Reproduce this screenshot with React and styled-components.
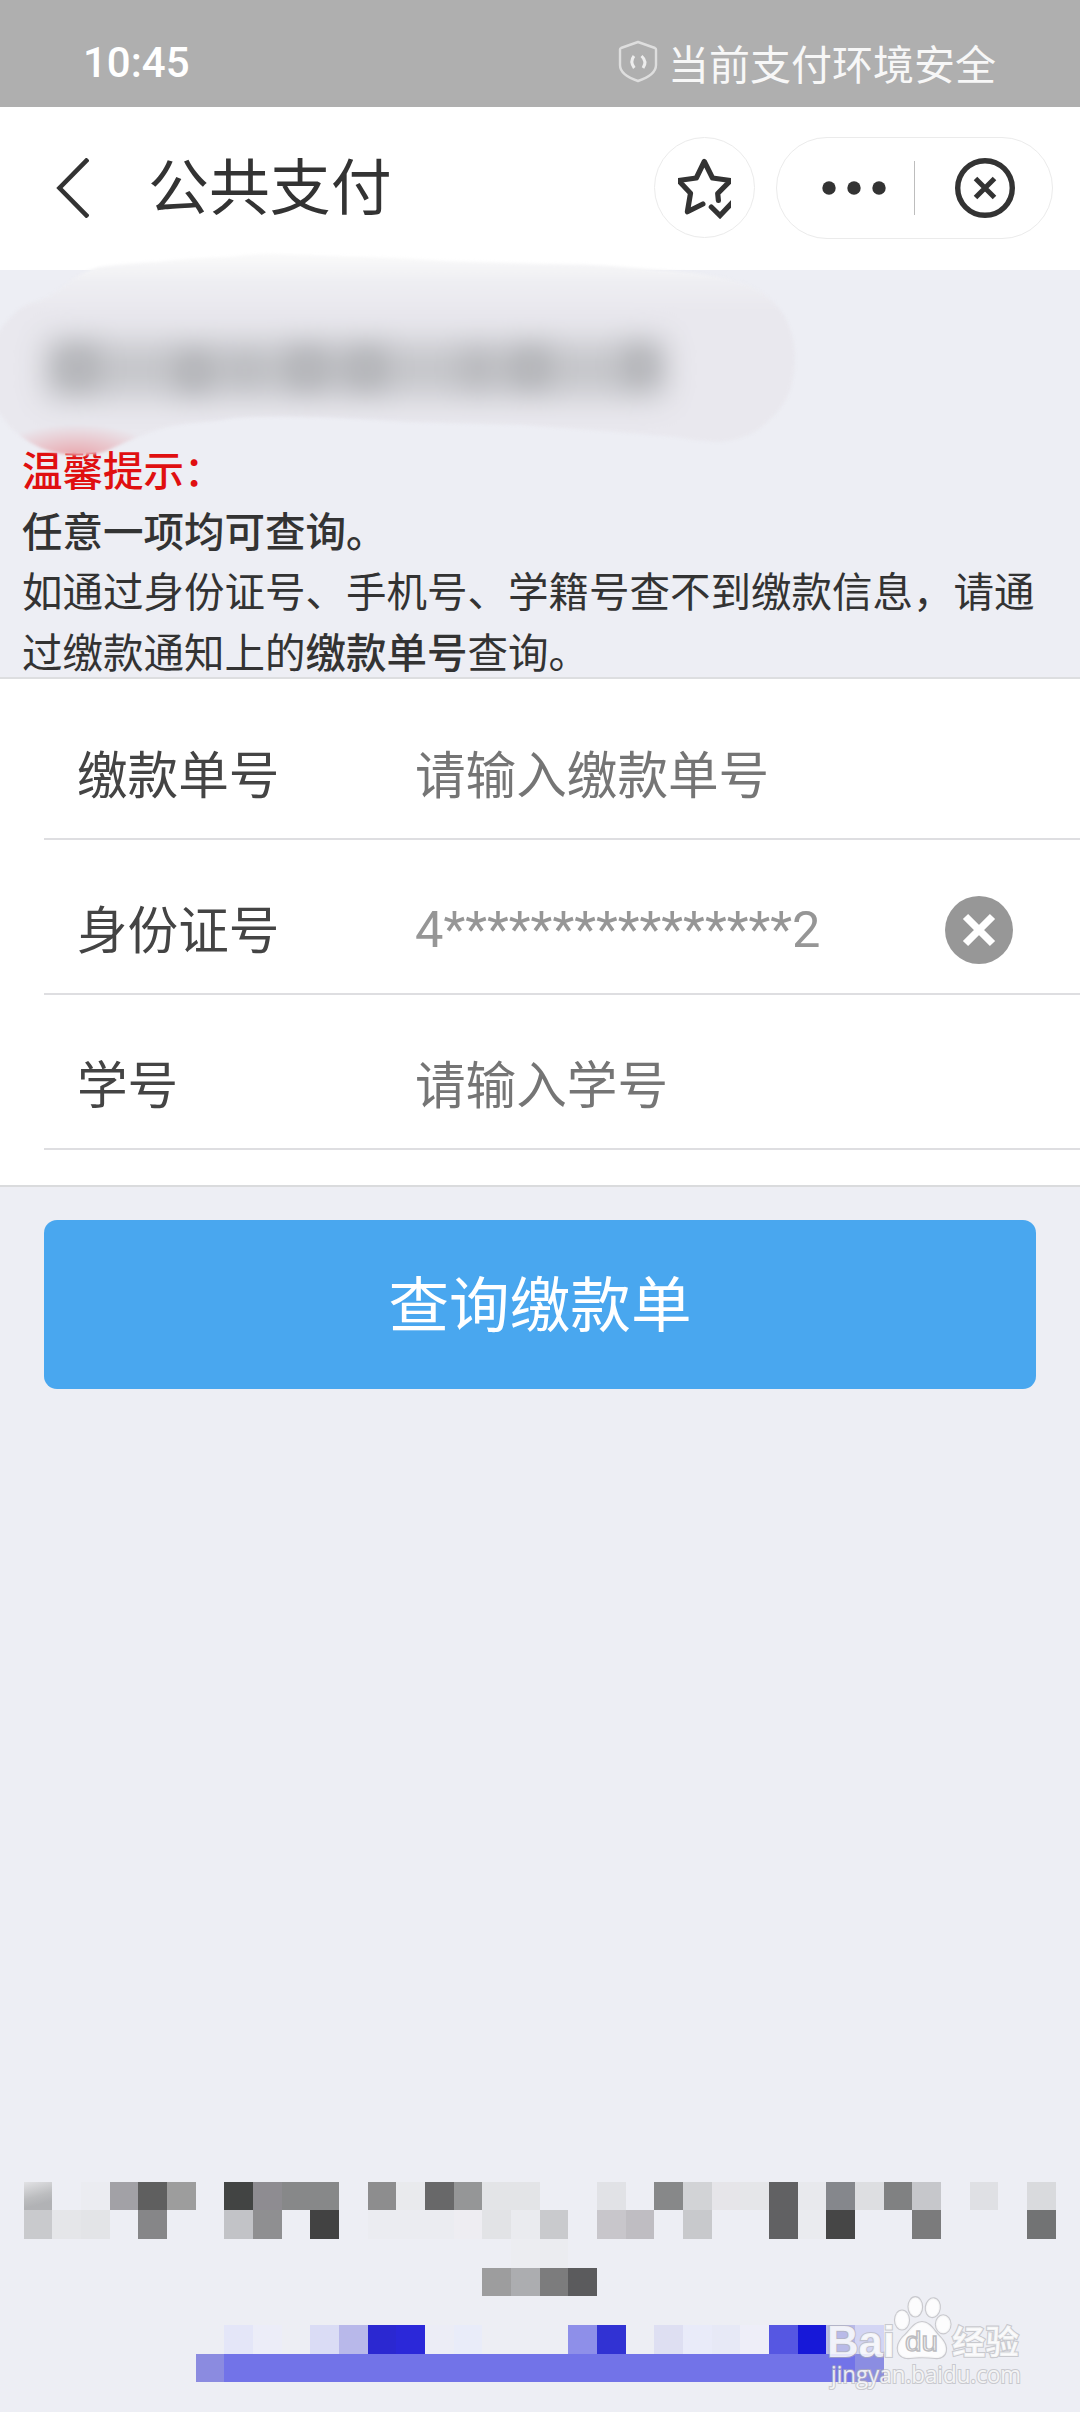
import React from "react";
import styled, { createGlobalStyle } from "styled-components";

const GlobalStyle = createGlobalStyle`
  * {
    box-sizing: border-box;
  }

  body {
    margin: 0;
    background-color: #edeef4;
    font-family: Roboto, "Noto Sans CJK SC", sans-serif;
  }
`;

const Screen = styled.div`
  position: relative;
  width: 1080px;
  height: 2412px;
  display: flex;
  flex-direction: column;
  overflow: hidden;
  background-color: #edeef4;
  color: #333333;
`;

// Status bar
const StatusBar = styled.div`
  height: 107px;
  flex-shrink: 0;
  display: flex;
  align-items: center;
  justify-content: space-between;
  padding: 18px 84px 0 83px;
  background-color: #afafaf;
`;

const Time = styled.div`
  font-size: 42px;
  font-weight: 500;
  line-height: 50px;
  color: #ffffff;
`;

const SafeTip = styled.div`
  display: flex;
  align-items: center;
  gap: 10px;
  font-family: "Noto Sans CJK SC", sans-serif;
  font-size: 41px;
  line-height: 50px;
  color: #f7f7f7;
  margin-top: -2px;

  svg {
    margin-top: -2px;
  }
`;

// Title bar
const NavBar = styled.header`
  height: 163px;
  flex-shrink: 0;
  display: flex;
  align-items: center;
  padding: 0 27px 2px 53px;
  background-color: #ffffff;
`;

const Title = styled.h1`
  flex: 1;
  margin: 0 0 7px 59px;
  font-family: "Noto Sans CJK SC", sans-serif;
  font-size: 60.9px;
  font-weight: 400;
  line-height: 80px;
`;

const FavoriteButton = styled.button`
  width: 101px;
  height: 101px;
  display: flex;
  align-items: center;
  justify-content: center;
  margin-right: 21px;
  padding: 0;
  border: 1px solid #ebebeb;
  border-radius: 50%;
  background: none;
`;

const Capsule = styled.div`
  width: 277px;
  height: 102px;
  display: flex;
  align-items: center;
  border: 1px solid #ebebeb;
  border-radius: 51px;
`;

const CapsuleButton = styled.button`
  width: ${(props) => props.$width};
  display: flex;
  justify-content: center;
  padding: ${(props) => props.$padding};
  border: 0;
  background: none;
`;

const CapsuleDivider = styled.span`
  width: 1px;
  height: 54px;
  background-color: #bdbdbd;
`;

// Notice
const Notice = styled.section`
  height: 407px;
  flex-shrink: 0;
  padding: 169px 22px 0;
  font-family: "Noto Sans CJK SC", sans-serif;
  font-size: 40.5px;
  line-height: 60.5px;
`;

const NoticeLine = styled.p`
  margin: 0;
  font-weight: ${(props) => (props.$strong ? 500 : 400)};
  color: ${(props) => props.$color || "#333333"};
`;

const Strong = styled.strong`
  font-weight: 500;
`;

const Smudge = styled.svg`
  position: absolute;
  top: 240px;
  left: 0;
  pointer-events: none;

  filter {
    color-interpolation-filters: sRGB;
  }
`;

// Form
const Form = styled.div`
  height: 510px;
  flex-shrink: 0;
  padding: 6px 0 0 44px;
  border-top: 2px solid #dddee0;
  border-bottom: 2px solid #dadbdd;
  background-color: #ffffff;
`;

const Field = styled.div`
  height: 155px;
  display: flex;
  align-items: center;
  padding: 26px 67px 0 33px;
  border-bottom: 2px solid #dedee1;
`;

const Label = styled.label`
  width: 338px;
  margin-bottom: 6px;
  font-family: "Noto Sans CJK SC", sans-serif;
  font-size: 50.6px;
  line-height: 70px;
  color: #444444;
`;

const Value = styled.div`
  flex: 1;
  margin-top: ${(props) => (props.$filled ? "0" : "4px")};
  font-size: 50.6px;
  line-height: 70px;
  color: ${(props) => (props.$filled ? "#969696" : "#757575")};
`;

const ClearButton = styled.button`
  display: flex;
  margin-top: 1px;
  padding: 0;
  border: 0;
  background: none;
`;

const SubmitButton = styled.button`
  height: 169px;
  flex-shrink: 0;
  margin: 33px 44px 0;
  padding: 0 0 9px;
  border: 0;
  border-radius: 13px;
  background-color: #49a7ef;
  font-family: "Noto Sans CJK SC", sans-serif;
  font-size: 60.6px;
  color: #ffffff;
`;

// Footer
const Footer = styled.footer`
  position: relative;
  margin-top: auto;
  padding: 0 24px 30px;
`;

const Mosaic = styled.div`
  display: grid;
  grid-template-columns: repeat(12, 28px 29px 29px);
  grid-template-rows: 28px 29px 29px 28px 29px 29px 28px;
`;

const Tile = styled.span`
  grid-row: ${(props) => props.$row};
  grid-column: ${(props) => props.$col} / span ${(props) => props.$span};
  background: ${(props) => props.$fill};
`;

const Watermark = styled.svg`
  position: absolute;
  right: 50px;
  bottom: 12px;
  overflow: visible;
`;

const fields = [
  { label: "缴款单号", value: "请输入缴款单号" },
  { label: "身份证号", value: "4****************2", filled: true },
  { label: "学号", value: "请输入学号" },
];

// row, first column, fill, columns covered
const tiles = [
  [0, 0, "linear-gradient(165deg, #e2e2e5 0%, #bcbdbf 50%, #b1b2b5 75%)"],
  [0, 2, "#ebecf1"],
  [0, 3, "#a2a1a6"],
  [0, 4, "#5f5f5f"],
  [0, 5, "#9d9d9d"],
  [0, 7, "#424443"],
  [0, 8, "#8e8c91"],
  [0, 9, "#878889", 2],
  [0, 12, "#8d8d8e"],
  [0, 13, "#e9eaed"],
  [0, 14, "#686869"],
  [0, 15, "#959697"],
  [0, 16, "#e3e4e7", 2],
  [0, 20, "#e1e2e6"],
  [0, 22, "#878889"],
  [0, 23, "#d2d3d6"],
  [0, 24, "#e6e5e9"],
  [0, 25, "#e5e6e9"],
  [0, 26, "#616163"],
  [0, 27, "#e8e9ed"],
  [0, 28, "#85878c"],
  [0, 29, "#dddee1"],
  [0, 30, "#808182"],
  [0, 31, "#c6c7cb"],
  [0, 33, "#dfe0e4"],
  [0, 35, "#d9dadd"],
  [1, 0, "#c9cacd"],
  [1, 1, "#e5e6e9"],
  [1, 2, "#e3e4e7"],
  [1, 4, "#868688"],
  [1, 7, "#c2c3c7"],
  [1, 8, "#8f8f91"],
  [1, 10, "#424242"],
  [1, 12, "#ebecf1", 3],
  [1, 15, "#eeedf2"],
  [1, 16, "#e2e3e6"],
  [1, 17, "#eaebef"],
  [1, 18, "#c9cacd"],
  [1, 20, "#c8c6cb"],
  [1, 21, "#bfbdc2"],
  [1, 23, "#c8c9cc"],
  [1, 26, "#616163"],
  [1, 27, "#eaebef"],
  [1, 28, "#464646"],
  [1, 31, "#7b7b7c"],
  [1, 35, "#727374"],
  [2, 17, "#ecedf1"],
  [2, 18, "#ebecf0"],
  [3, 16, "#9d9d9e"],
  [3, 17, "#acadb0"],
  [3, 18, "#7c7c7d"],
  [3, 19, "#5b5b5d"],
  [5, 7, "#e4e6f8"],
  [5, 8, "#ecedf8"],
  [5, 10, "#dadcf5"],
  [5, 11, "#b8b8ea"],
  [5, 12, "#2b28d1"],
  [5, 13, "#2b28d9"],
  [5, 14, "#ecedf6"],
  [5, 15, "#e9ecf9"],
  [5, 19, "#8e8fe9"],
  [5, 20, "#3132d3"],
  [5, 22, "#dedff2"],
  [5, 23, "#e9ebf9"],
  [5, 24, "#e7e9f6"],
  [5, 25, "#eeeef8"],
  [5, 26, "#5657e2"],
  [5, 27, "#1718d8"],
  [5, 28, "#b9bae8"],
  [5, 29, "#d3d5f4"],
  [6, 6, "#8b8be0"],
  [6, 7, "#7273e8", 22],
  [6, 29, "#8b8de2"],
];

const ShieldIcon = () => (
  <svg width="40" height="44" viewBox="0 0 40 44" fill="none">
    <path
      d="M20 3 L37 9 Q38 9.4 38 10.5 V26 Q38 36 20 42 Q2 36 2 26 V10.5 Q2 9.4 3 9 Z"
      stroke="#dedede"
      strokeWidth="2.4"
      strokeLinejoin="round"
    />
    <path
      d="M16 17 Q11.5 22.5 16.3 29 M23.5 17 Q29.5 22.5 25 29"
      stroke="#ededed"
      strokeWidth="3"
    />
  </svg>
);

const BackIcon = () => (
  <svg width="36" height="60" viewBox="0 0 36 60" fill="none">
    <path d="M35 1 L6.5 30 L35 59" stroke="#333" strokeWidth="4.6" />
  </svg>
);

const StarCheckIcon = () => (
  <svg width="53" height="62" viewBox="0 0 53 62" fill="none">
    <path
      d="M24.9 47 L9.4 54.8 L12.5 36.2 L0.5 23.5 L18.3 21 L26.3 4.5 L34.5 21 L52.5 23.5 L39.7 36.5 L40.4 43.5"
      stroke="#333"
      strokeWidth="5.2"
      strokeLinecap="round"
      strokeLinejoin="round"
    />
    <path
      d="M33.3 50 L42 58.5 L54 45.8"
      stroke="#333"
      strokeWidth="5.2"
      strokeLinecap="round"
    />
  </svg>
);

const MoreIcon = () => (
  <svg width="64" height="14" viewBox="0 0 64 14" fill="#333">
    <circle cx="7" cy="7" r="6.7" />
    <circle cx="32" cy="7" r="6.7" />
    <circle cx="57" cy="7" r="6.7" />
  </svg>
);

const CloseIcon = () => (
  <svg width="60" height="60" viewBox="0 0 60 60" fill="none">
    <circle cx="30" cy="30" r="27.3" stroke="#333" strokeWidth="5.4" />
    <path
      d="M20.5 20.5 L39.5 39.5 M39.5 20.5 L20.5 39.5"
      stroke="#333"
      strokeWidth="5"
    />
  </svg>
);

const ClearIcon = () => (
  <svg width="68" height="68" viewBox="0 0 68 68" fill="none">
    <circle cx="34" cy="34" r="34" fill="#979797" />
    <path
      d="M20.5 20.5 L47.5 47.5 M47.5 20.5 L20.5 47.5"
      stroke="#fff"
      strokeWidth="7.4"
    />
  </svg>
);

// Finger-painted blur over the payee name
const HiddenName = () => (
  <Smudge width="820" height="230" viewBox="0 240 820 230">
    <defs>
      <linearGradient
        id="haze"
        gradientUnits="userSpaceOnUse"
        x1="0"
        y1="254"
        x2="0"
        y2="310"
      >
        <stop offset="0" stopColor="#fafafa" />
        <stop offset="0.3" stopColor="#f3f3f5" />
        <stop offset="0.5" stopColor="#eeeef2" />
        <stop offset="1" stopColor="#e9e8ee" />
      </linearGradient>
      <clipPath id="outline">
        <path d="M-5 338 Q12 310 31 303 Q50 298 63 287 Q80 272 99 267 Q130 263 157 262 Q190 258 230 257 Q255 253 282 254 L366 257 Q405 258 445 261 L549 264 Q585 264 612 266 L659 270 Q695 272 722 278 Q745 282 758 290 Q776 301 785 317 Q795 336 795 357 Q795 375 790 390 Q783 409 769 420 Q758 432 743 437 Q730 442 716 442 Q696 441 675 437 L617 432 L523 425 L408 422 L340 418 Q265 415 235 418 Q212 422 194 423 Q172 425 157 430 Q134 438 115 447 Q100 455 84 455 Q68 456 52 452 Q41 449 31 443 Q19 436 10 427 L-5 408 Z" />
      </clipPath>
      <filter id="edge" x="-5%" y="-10%" width="110%" height="120%">
        <feGaussianBlur stdDeviation="1.5" />
      </filter>
      <filter id="soft" x="-20%" y="-100%" width="140%" height="300%">
        <feGaussianBlur stdDeviation="16" />
      </filter>
      <filter id="spot" x="-20%" y="-100%" width="140%" height="300%">
        <feGaussianBlur stdDeviation="13" />
      </filter>
      <radialGradient id="redTint">
        <stop offset="0" stopColor="#e8757c" stopOpacity="0.6" />
        <stop offset="1" stopColor="#e8757c" stopOpacity="0" />
      </radialGradient>
    </defs>
    <g filter="url(#edge)">
      <g clipPath="url(#outline)">
        <rect x="-5" y="245" width="810" height="220" fill="url(#haze)" />
        <rect
          x="46"
          y="342"
          width="618"
          height="54"
          fill="#c4c5c9"
          filter="url(#soft)"
        />
        <g fill="#a2a3a7" opacity="0.5" filter="url(#spot)">
          <rect x="54" y="343" width="46" height="48" />
          <rect x="174" y="350" width="40" height="44" />
          <rect x="226" y="350" width="40" height="40" opacity="0.5" />
          <rect x="284" y="345" width="46" height="46" />
          <rect x="344" y="345" width="44" height="46" />
          <rect x="460" y="347" width="34" height="42" opacity="0.7" />
          <rect x="508" y="345" width="44" height="44" />
          <rect x="622" y="343" width="38" height="44" />
        </g>
        <ellipse cx="76" cy="458" rx="84" ry="34" fill="url(#redTint)" />
      </g>
    </g>
  </Smudge>
);

const BaiduMark = () => (
  <Watermark width="206" height="104" viewBox="824 2296 206 104">
    <g
      fill="#ffffff"
      fillOpacity="0.82"
      stroke="#b0b0b4"
      strokeOpacity="0.6"
      strokeWidth="2.2"
      paintOrder="stroke"
    >
      <ellipse cx="902" cy="2320" rx="7" ry="9.5" />
      <ellipse cx="915.3" cy="2306.8" rx="6.8" ry="9.6" />
      <ellipse cx="932.8" cy="2307.7" rx="7" ry="9.4" transform="rotate(8 932.8 2307.7)" />
      <ellipse cx="943.2" cy="2324.3" rx="7.3" ry="9" />
      <path d="M922 2322 C930 2322 934 2331 940 2337 C950 2347 947 2359 935 2358 C927 2357 917 2357 910 2358 C897 2359 894 2347 903 2337 C910 2331 914 2322 922 2322 Z" />
      <text
        x="827"
        y="2357"
        fontFamily="Liberation Sans, sans-serif"
        fontSize="44"
        fontWeight="700"
        textLength="68"
        lengthAdjust="spacingAndGlyphs"
      >
        Bai
      </text>
      <text
        x="952"
        y="2354"
        fontFamily="Noto Sans CJK SC, sans-serif"
        fontSize="33.5"
        fontWeight="700"
      >
        经验
      </text>
      <text
        x="831"
        y="2382.5"
        fontFamily="Open Sans, sans-serif"
        fontSize="24"
        textLength="190"
        lengthAdjust="spacingAndGlyphs"
      >
        jingyan.baidu.com
      </text>
    </g>
    <text
      x="905"
      y="2351"
      fontFamily="Liberation Sans, sans-serif"
      fontSize="28"
      fill="#f4f4f6"
      stroke="#bcbcc0"
      strokeWidth="1.4"
      textLength="33"
      lengthAdjust="spacingAndGlyphs"
    >
      du
    </text>
  </Watermark>
);

const App = () => {
  return (
    <>
      <GlobalStyle />
      <Screen>
        <StatusBar>
          <Time>10:45</Time>
          <SafeTip>
            <ShieldIcon />
            当前支付环境安全
          </SafeTip>
        </StatusBar>

        <NavBar>
          <BackIcon />
          <Title>公共支付</Title>
          <FavoriteButton>
            <StarCheckIcon />
          </FavoriteButton>
          <Capsule>
            <CapsuleButton $width="137px" $padding="0 0 0 17px">
              <MoreIcon />
            </CapsuleButton>
            <CapsuleDivider />
            <CapsuleButton $width="137px" $padding="0 0 0 3px">
              <CloseIcon />
            </CapsuleButton>
          </Capsule>
        </NavBar>

        <Notice>
          <NoticeLine $strong $color="#e00f10">
            温馨提示：
          </NoticeLine>
          <NoticeLine $strong>任意一项均可查询。</NoticeLine>
          <NoticeLine>
            如通过身份证号、手机号、学籍号查不到缴款信息，请通过缴款通知上的
            <Strong>缴款单号</Strong>查询。
          </NoticeLine>
        </Notice>

        <Form>
          {fields.map((field) => (
            <Field key={field.label}>
              <Label>{field.label}</Label>
              <Value $filled={field.filled}>{field.value}</Value>
              {field.filled && (
                <ClearButton>
                  <ClearIcon />
                </ClearButton>
              )}
            </Field>
          ))}
        </Form>

        <SubmitButton>查询缴款单</SubmitButton>

        <Footer>
          <Mosaic>
            {tiles.map(([row, col, fill, span = 1]) => (
              <Tile
                key={`${row}-${col}`}
                $row={row + 1}
                $col={col + 1}
                $span={span}
                $fill={fill}
              />
            ))}
          </Mosaic>
          <BaiduMark />
        </Footer>

        <HiddenName />
      </Screen>
    </>
  );
};

export default App;
